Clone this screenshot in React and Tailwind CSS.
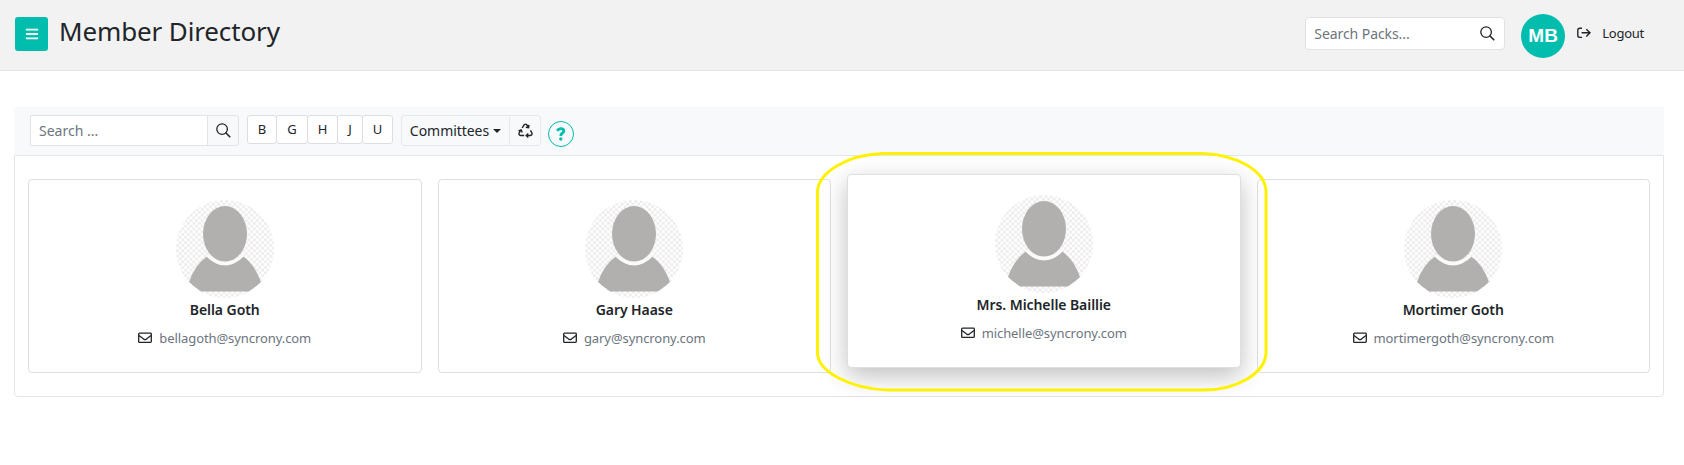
import { FaBars } from 'react-icons/fa';

const members = [
  { name: 'Bella Goth', email: 'bellagoth@syncrony.com' },
  { name: 'Gary Haase', email: 'gary@syncrony.com' },
  { name: 'Mrs. Michelle Baillie', email: 'michelle@syncrony.com', active: true },
  { name: 'Mortimer Goth', email: 'mortimergoth@syncrony.com' }
];

const letters = [
  { letter: 'B', width: 'w-[30px]' },
  { letter: 'G', width: 'w-8' },
  { letter: 'H', width: 'w-[31px]' },
  { letter: 'J', width: 'w-[26px]' },
  { letter: 'U', width: 'w-[31px]' }
];

function SearchIcon() {
  return (
    <svg width="15" height="15" viewBox="0 0 15 15" fill="none" stroke="#212529" className="shrink-0">
      <circle cx="6.1" cy="6.1" r="5.3" strokeWidth="1.3" />
      <path d="M10 10l3.8 3.8" strokeWidth="1.6" strokeLinecap="round" />
    </svg>
  );
}

function EnvelopeIcon() {
  return (
    <svg width="14" height="12" viewBox="0 0 14 12" fill="none" stroke="#212529" strokeWidth="1.3" className="shrink-0">
      <rect x="0.7" y="1.2" width="12.6" height="9.2" rx="0.8" />
      <path d="M1 3.6l4.6 3.5q1.4 1 2.8 0L13 3.6" />
    </svg>
  );
}

function LogoutIcon() {
  return (
    <svg width="14" height="12" viewBox="0 0 14 12" fill="none" stroke="#212529" strokeWidth="1.4" className="shrink-0">
      <path d="M5 1.2H2.7Q.8 1.2.8 3v5.6q0 1.8 1.9 1.8H5" />
      <path d="M4.6 5.8H13M9.3 2.2L13 5.8L9.3 9.4" />
    </svg>
  );
}

function RecycleIcon() {
  return (
    <svg width="15" height="15" viewBox="0 0 15 15" fill="none" stroke="#212529" strokeWidth="1.4" className="shrink-0">
      <path d="M4.2 5L6.2 1.8Q7.5.4 8.8 1.8L10.4 4.4M11 1.8L10.6 4.7L7.8 4.2" />
      <path d="M12.4 7.3L13.9 10Q14.6 12.2 12.4 12.5H8.4M10.3 10.5L8.2 12.5L10.3 14.5" />
      <path d="M6.2 12.5H2.6Q.4 12.2 1.1 10L2.9 7M.5 7.8L3.1 6.8L4.2 9.5" />
    </svg>
  );
}

function Avatar() {
  return (
    <svg width="98" height="98" viewBox="0 0 98 98" className="block">
      <defs>
        <pattern id="checks" width="5.5" height="5.5" patternUnits="userSpaceOnUse">
          <rect width="5.5" height="5.5" fill="#fff" />
          <rect width="2.75" height="2.75" fill="#ededed" />
          <rect x="2.75" y="2.75" width="2.75" height="2.75" fill="#ededed" />
        </pattern>
        <clipPath id="round">
          <circle cx="49" cy="49" r="49" />
        </clipPath>
      </defs>
      <g clipPath="url(#round)">
        <rect width="98" height="98" fill="url(#checks)" />
        <path
          d="M31.5 56Q39 65.5 49 65.5Q59 65.5 66.5 56Q79 64.5 85 82L81 85.5L73 91.5H25L17 85.5L13 82Q19 64.5 31.5 56Z"
          fill="#b1b0ae"
        />
        <path d="M31.5 55.5Q39 63.5 49 63.5Q59 63.5 66.5 55.5" stroke="#fafafa" strokeWidth="3" fill="none" />
        <ellipse cx="49" cy="33.8" rx="22" ry="27.7" fill="#b1b0ae" />
      </g>
    </svg>
  );
}

function MemberCard({ name, email, active }) {
  return (
    <div
      className={`flex h-[194px] flex-col items-center rounded border border-[#dfdfdf] bg-white pt-5 ${
        active ? 'z-10 -translate-y-[5px] shadow-[0_8px_24px_rgba(0,0,0,0.25)]' : ''
      }`}
    >
      <Avatar />
      <p className="mt-px text-sm leading-[21px] font-semibold tracking-[-0.005em] text-[#212529]">{name}</p>
      <div className="mt-2 flex items-center gap-[7px] text-[13px] leading-5 tracking-[-0.006em]">
        <EnvelopeIcon />
        <span className="text-[#6c757d]">{email}</span>
      </div>
    </div>
  );
}

export default function App() {
  return (
    <div className="h-[465px] overflow-hidden bg-white font-['Noto_Sans',sans-serif] text-[#212529]">
      {/* Header */}
      <header className="flex h-[71px] items-start border-b border-[#e3e3e3] bg-[#f2f2f2] pl-[15px]">
        <button className="mt-[17px] flex h-[34px] w-[33px] items-center justify-center rounded-[3px] bg-[#00bdae] text-white">
          <FaBars size={14} />
        </button>
        <h1 className="mt-[13px] ml-[11px] text-[26px] leading-9 tracking-[-0.005em]">Member Directory</h1>
        <div className="mt-[17px] ml-auto flex h-[33px] w-[200px] items-center justify-between rounded border border-[#dee2e6] bg-white pr-[9px] pl-2">
          <span className="text-sm tracking-[-0.005em] text-[#6c757d]">Search Packs...</span>
          <SearchIcon />
        </div>
        <div className="mt-[14px] ml-4 flex h-11 w-11 items-center justify-center rounded-full bg-[#00bdae] font-['Liberation_Sans',sans-serif] text-[19px] font-bold tracking-[0.02em] text-white">
          MB
        </div>
        <button className="mt-[23px] mr-10 ml-3 flex items-center gap-[11px] text-[13px] leading-5 tracking-[-0.02em]">
          <LogoutIcon />
          Logout
        </button>
      </header>

      <main className="mx-[14px] mt-9 w-[1650px]">
        {/* Toolbar */}
        <div className="flex h-12 items-start bg-[#f8f9fb] pt-2 pl-4">
          <div className="flex h-[31px] w-[209px] rounded-r-[3px] border border-[#e1e4e7]">
            <div className="flex flex-1 items-center bg-white pl-2 text-sm text-[#6c757d]">Search ...</div>
            <div className="flex w-[31px] items-center justify-center border-l border-[#e1e4e7]">
              <SearchIcon />
            </div>
          </div>
          <div className="ml-2 flex">
            {letters.map(({ letter, width }) => (
              <button
                key={letter}
                className={`h-[29px] rounded-[3px] border border-[#dcdfe2] bg-white text-[13px] not-first:-ml-px ${width}`}
              >
                {letter}
              </button>
            ))}
          </div>
          <div className="ml-2 flex h-[31px] rounded-[3px] border border-[#e6e8ea]">
            <button className="flex w-[107px] items-center justify-center gap-1 text-sm tracking-[-0.003em]">
              Committees
              <span className="border-x-4 border-t-4 border-x-transparent border-t-[#212529]" />
            </button>
            <button className="flex w-[31px] items-center justify-center border-l border-[#e6e8ea]">
              <RecycleIcon />
            </button>
          </div>
          <button className="mt-[6px] ml-[7px] flex h-[26px] w-[26px] items-center justify-center rounded-full border border-[#00bdae] text-[#00bdae]">
            <svg width="10" height="14" viewBox="0 0 10 14" fill="none" stroke="currentColor" strokeWidth="2.8">
              <path d="M1 3.8Q2.5 1.6 4.8 1.6Q7.8 1.6 7.8 4Q7.8 5.3 6.2 6.2Q4.8 7 4.8 8.9" />
              <circle cx="4.8" cy="12" r="1.7" fill="currentColor" stroke="none" />
            </svg>
          </button>
        </div>

        {/* Member cards */}
        <div className="relative rounded-b border border-[#e3e6e9] px-[13px] pt-[23px] pb-[23px]">
          <div className="grid grid-cols-4 gap-4">
            {members.map((member) => (
              <MemberCard key={member.email} {...member} />
            ))}
          </div>
          <svg width="454" height="244" viewBox="0 0 454 244" fill="none" className="absolute -top-1.5 left-[800px] z-20">
            <path
              d="M67 3.5H389C421 5 449 20 451 40V204C449 224 421 240 389 240H73C36 239 3 222 2.5 203V41C4 22 32 5 67 3.5Z"
              stroke="#fff200"
              strokeWidth="3"
            />
          </svg>
        </div>
      </main>
    </div>
  );
}
